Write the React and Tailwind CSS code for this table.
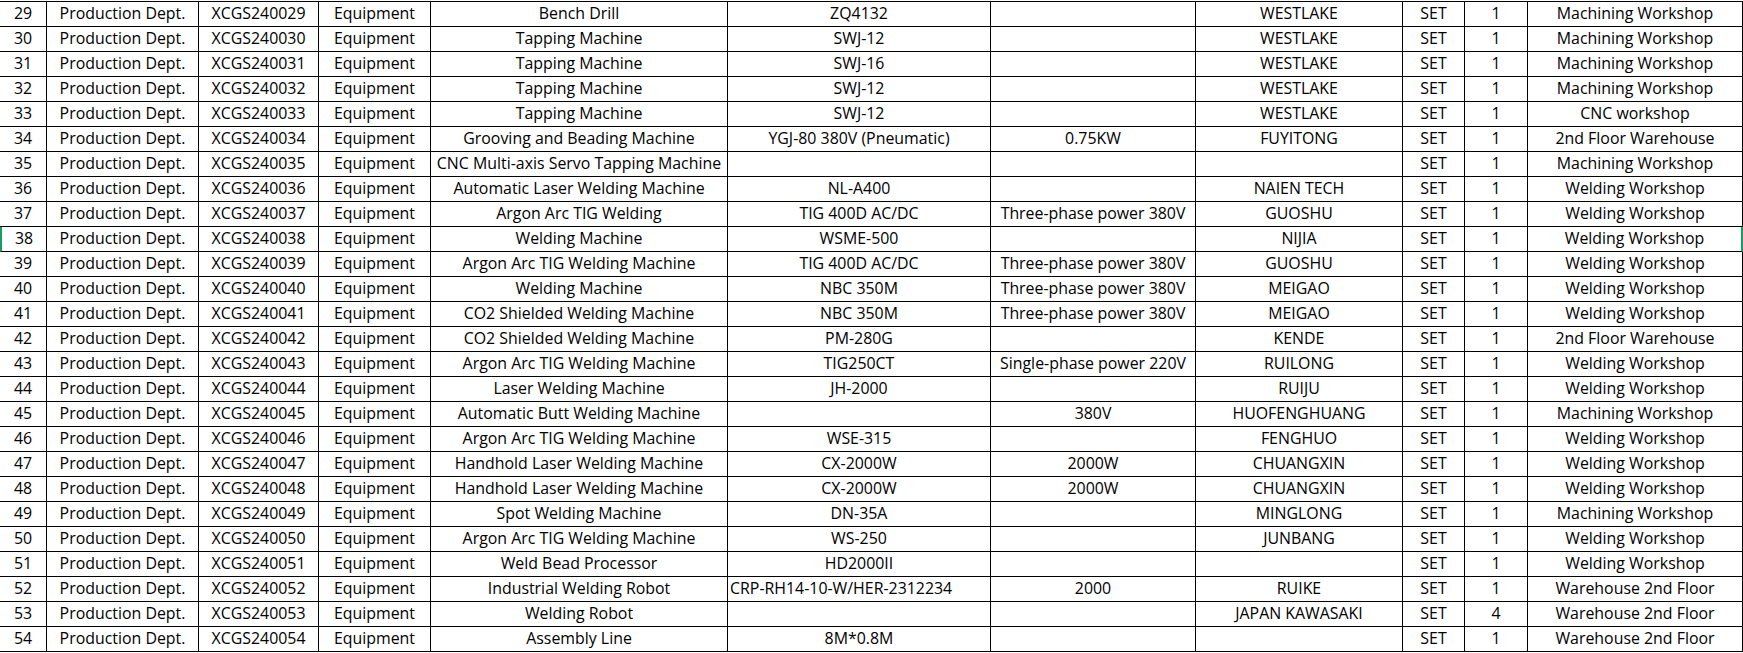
import React from "react";

const rows = [
  [29, "Bench Drill", "ZQ4132", "", "WESTLAKE", "1", "Machining Workshop"],
  [30, "Tapping Machine", "SWJ-12", "", "WESTLAKE", "1", "Machining Workshop"],
  [31, "Tapping Machine", "SWJ-16", "", "WESTLAKE", "1", "Machining Workshop"],
  [32, "Tapping Machine", "SWJ-12", "", "WESTLAKE", "1", "Machining Workshop"],
  [33, "Tapping Machine", "SWJ-12", "", "WESTLAKE", "1", "CNC workshop"],
  [34, "Grooving and Beading Machine", "YGJ-80 380V (Pneumatic)", "0.75KW", "FUYITONG", "1", "2nd Floor Warehouse"],
  [35, "CNC Multi-axis Servo Tapping Machine", "", "", "", "1", "Machining Workshop"],
  [36, "Automatic Laser Welding Machine", "NL-A400", "", "NAIEN TECH", "1", "Welding Workshop"],
  [37, "Argon Arc TIG Welding", "TIG 400D AC/DC", "Three-phase power 380V", "GUOSHU", "1", "Welding Workshop"],
  [38, "Welding Machine", "WSME-500", "", "NIJIA", "1", "Welding Workshop"],
  [39, "Argon Arc TIG Welding Machine", "TIG 400D AC/DC", "Three-phase power 380V", "GUOSHU", "1", "Welding Workshop"],
  [40, "Welding Machine", "NBC 350M", "Three-phase power 380V", "MEIGAO", "1", "Welding Workshop"],
  [41, "CO2 Shielded Welding Machine", "NBC 350M", "Three-phase power 380V", "MEIGAO", "1", "Welding Workshop"],
  [42, "CO2 Shielded Welding Machine", "PM-280G", "", "KENDE", "1", "2nd Floor Warehouse"],
  [43, "Argon Arc TIG Welding Machine", "TIG250CT", "Single-phase power 220V", "RUILONG", "1", "Welding Workshop"],
  [44, "Laser Welding Machine", "JH-2000", "", "RUIJU", "1", "Welding Workshop"],
  [45, "Automatic Butt Welding Machine", "", "380V", "HUOFENGHUANG", "1", "Machining Workshop"],
  [46, "Argon Arc TIG Welding Machine", "WSE-315", "", "FENGHUO", "1", "Welding Workshop"],
  [47, "Handhold Laser Welding Machine", "CX-2000W", "2000W", "CHUANGXIN", "1", "Welding Workshop"],
  [48, "Handhold Laser Welding Machine", "CX-2000W", "2000W", "CHUANGXIN", "1", "Welding Workshop"],
  [49, "Spot Welding Machine", "DN-35A", "", "MINGLONG", "1", "Machining Workshop"],
  [50, "Argon Arc TIG Welding Machine", "WS-250", "", "JUNBANG", "1", "Welding Workshop"],
  [51, "Weld Bead Processor", "HD2000II", "", "", "1", "Welding Workshop"],
  [52, "Industrial Welding Robot", "CRP-RH14-10-W/HER-2312234", "2000", "RUIKE", "1", "Warehouse 2nd Floor"],
  [53, "Welding Robot", "", "", "JAPAN KAWASAKI", "4", "Warehouse 2nd Floor"],
  [54, "Assembly Line", "8M*0.8M", "", "", "1", "Warehouse 2nd Floor"],
];

// selected row in the sheet (green marks at both edges)
const ACTIVE = 38;

function Cell({ children, className = "" }) {
  return (
    <div
      className={
        "h-[25px] border-r border-b border-black flex items-center justify-center whitespace-nowrap overflow-visible leading-none " +
        className
      }
    >
      {children}
    </div>
  );
}

export default function App() {
  return (
    <div
      className="bg-white text-black w-[1743px] h-[653px] overflow-hidden pt-px"
      style={{ fontFamily: '"Open Sans", "Noto Sans", sans-serif' }}
    >
      <div className="grid grid-cols-[47px_152px_120px_112px_297px_263px_205px_207px_62px_63px_215px] border-t border-black text-[15.9px]">
        {rows.map(([no, name, model, power, brand, qty, place]) => {
          const active = no === ACTIVE;
          const wide = model.startsWith("CRP");
          return (
            <React.Fragment key={no}>
              <Cell className={active ? "border-l-2 border-l-[#1a9b66]" : ""}>{no}</Cell>
              <Cell>Production Dept.</Cell>
              <Cell>{`XCGS2400${no}`}</Cell>
              <Cell>Equipment</Cell>
              <Cell>{name}</Cell>
              <Cell className={wide ? "justify-start pl-[2px]" : ""}>{model}</Cell>
              <Cell>{power}</Cell>
              <Cell>{brand}</Cell>
              <Cell>SET</Cell>
              <Cell>{qty}</Cell>
              <Cell className={active ? "border-r-2 border-r-[#1a9b66]" : ""}>{place}</Cell>
            </React.Fragment>
          );
        })}
      </div>
    </div>
  );
}
